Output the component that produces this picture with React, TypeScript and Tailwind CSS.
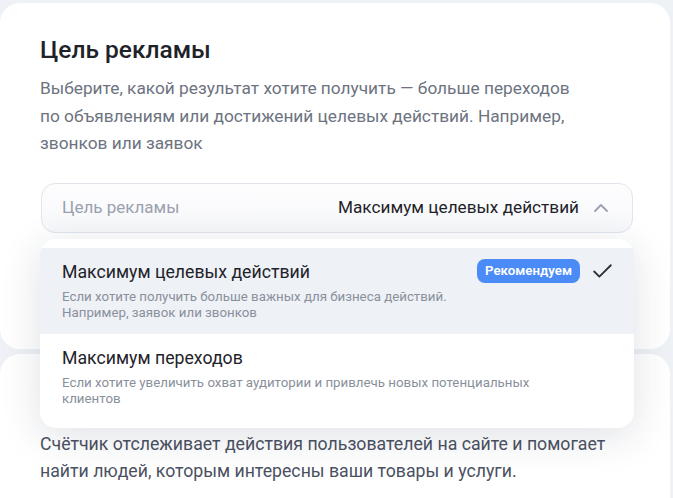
import { Check, ChevronUp } from "lucide-react";

const OPTIONS = [
  {
    title: "Максимум целевых действий",
    desc: "Если хотите получить больше важных для бизнеса действий. Например, заявок или звонков",
    recommended: true,
    selected: true,
  },
  {
    title: "Максимум переходов",
    desc: "Если хотите увеличить охват аудитории и привлечь новых потенциальных клиентов",
    recommended: false,
    selected: false,
  },
];

export default function App() {
  return (
    <div
      className="relative h-[498px] overflow-hidden bg-[#eef1f5] pr-[3px] pt-[3px] text-[#1f2329]"
      style={{ fontFamily: "Roboto, 'Noto Sans', sans-serif" }}
    >
      <div className="relative h-[346px] rounded-[20px] bg-white px-10 pt-[30px]">
        <h1 className="text-[24.5px] leading-[34px] font-medium">Цель рекламы</h1>
        <p className="mt-[8px] w-[552px] text-[17.3px] leading-[27.5px] text-[#6d7380]">
          Выберите, какой результат хотите получить — больше переходов по объявлениям или
          достижений целевых действий. Например, звонков или заявок
        </p>

        <div className="relative mt-[25px] mr-[-3px] ml-[1px]">
          <div className="flex h-[50px] items-center rounded-[14px] border border-[#e1e4eb] bg-gradient-to-b from-[#fdfdfe] to-[#f7f8fa] pr-[19px] pl-[20px]">
            <span className="text-[17px] text-[#9ba1ad]">Цель рекламы</span>
            <span className="ml-auto text-[17.2px] text-[#1f2329]">Максимум целевых действий</span>
            <ChevronUp className="ml-[10px] h-[24px] w-[24px] text-[#9ba1ad]" strokeWidth={1.8} />
          </div>

          <div className="absolute top-[56px] left-[-1px] z-10 w-[594px] overflow-hidden rounded-[16px] bg-white pt-[9px] pb-[8px] shadow-[0_8px_40px_rgba(30,40,70,0.14)]">
            {OPTIONS.map((o) => (
              <div
                key={o.title}
                className={
                  o.selected
                    ? "flex items-start gap-[10px] bg-[#eef1f6] pt-[12px] pr-[19px] pb-[12px] pl-[22px]"
                    : "flex items-start gap-[10px] pt-[12px] pr-[19px] pb-[12px] pl-[22px]"
                }
              >
                <div className="min-w-0 flex-1">
                  <div className="text-[17.7px] leading-[24px] text-[#1f2329]">{o.title}</div>
                  <div className="mt-[5px] max-w-[480px] text-[13.3px] leading-[16.5px] text-[#8a909b]">
                    {o.desc}
                  </div>
                </div>
                {o.recommended && (
                  <span className="mt-[-1px] shrink-0 rounded-[8px] bg-[#4b8bf7] px-[8px] py-[3px] text-[13.3px] leading-[18px] font-semibold text-white">
                    Рекомендуем
                  </span>
                )}
                {o.selected && (
                  <Check className="mt-[-1px] shrink-0 h-[25px] w-[25px] text-[#2b2f36]" strokeWidth={1.7} />
                )}
              </div>
            ))}
          </div>
        </div>
      </div>

      <div className="mt-[5px] h-[200px] rounded-[20px] bg-white px-10 pt-[77px]">
        <p className="w-[590px] text-[17.7px] leading-[27px] text-[#4b5161]">
          Счётчик отслеживает действия пользователей на сайте и помогает найти людей, которым
          интересны ваши товары и услуги.
        </p>
      </div>
    </div>
  );
}
